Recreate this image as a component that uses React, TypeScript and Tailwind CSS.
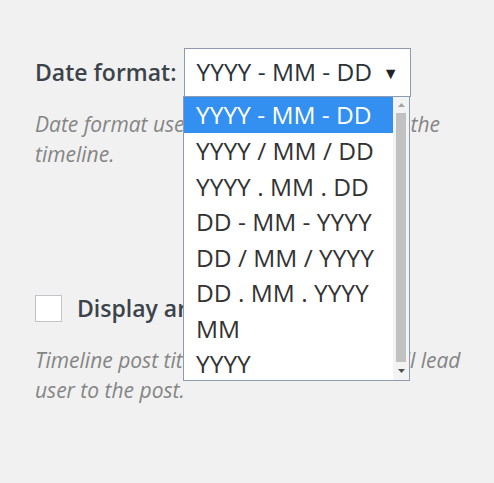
const options = [
  "YYYY - MM - DD",
  "YYYY / MM / DD",
  "YYYY . MM . DD",
  "DD - MM - YYYY",
  "DD / MM / YYYY",
  "DD . MM . YYYY",
  "MM",
  "YYYY",
];

export default function App() {
  return (
    <div
      className="relative h-[483px] w-[494px] overflow-hidden bg-[#f1f1f1] text-[#3c434a]"
      style={{ fontFamily: '"Open Sans", sans-serif' }}
    >
      <div className="w-[480px] pl-[35px] pt-[48px]">
        {/* Date format row */}
        <div className="flex items-center gap-[7px]">
          <span className="text-[23px] font-semibold text-[#3c434a]">Date format:</span>
          <div className="flex h-[49px] w-[227px] items-center justify-between border border-[#8c9bb0] bg-white pl-[12px] pr-[11px]">
            <span className="text-[24.5px] text-[#2c3338]">YYYY - MM - DD</span>
            <span className="text-[16px] text-[#1d2327]">▼</span>
          </div>
        </div>
        <p className="mt-[12px] text-[21px] italic leading-[30px] text-[#858585]">
          Date format used to display all dates on the timeline.
        </p>

        {/* Checkbox row */}
        <div className="mt-[122px] flex items-center gap-[15px]">
          <span className="h-[27px] w-[27px] border border-[#c3c4c7] bg-white" />
          <span className="text-[23px] font-semibold text-[#3c434a]">Display archive link</span>
        </div>
        <p className="mt-[19px] text-[21px] italic leading-[30px] text-[#858585]">
          Timeline post titles will be links which will lead user to the post.
        </p>
      </div>

      {/* Open select list */}
      <div className="absolute left-[183px] top-[96px] flex h-[285px] w-[227px] border border-[#8c9bb0] bg-white">
        <div className="flex-1 overflow-hidden">
          {options.map((o, i) => (
            <div
              key={o}
              className={
                i === 0
                  ? "h-[36px] bg-[#3390f0] pl-[12px] text-[24.5px] leading-[36px] text-white"
                  : "h-[35.5px] pl-[12px] text-[24.5px] leading-[35.5px] text-[#333333]"
              }
            >
              {o}
            </div>
          ))}
        </div>
        <div className="flex w-[16px] flex-col items-center bg-[#f3f3f3]">
          <div className="flex h-[16px] items-center justify-center">
            <svg width="7" height="4" viewBox="0 0 7 4">
              <path d="M0 4 L3.5 0 L7 4 Z" fill="#a3a3a3" />
            </svg>
          </div>
          <div className="w-[10px] flex-1 bg-[#c1c1c1]" />
          <div className="flex h-[18px] items-center justify-center">
            <svg width="7" height="4" viewBox="0 0 7 4">
              <path d="M0 0 L3.5 4 L7 0 Z" fill="#505050" />
            </svg>
          </div>
        </div>
      </div>
    </div>
  );
}
